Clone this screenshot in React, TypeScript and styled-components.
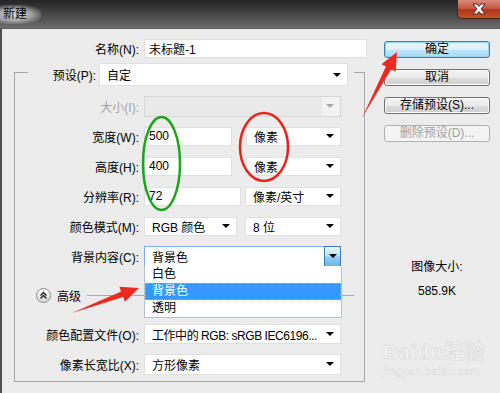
import styled, { createGlobalStyle } from 'styled-components';

const GlobalStyle = createGlobalStyle`
  html, body {
    margin: 0;
    padding: 0;
    background: #ececec;
  }
  body {
    font-family: "Liberation Sans", "Noto Sans CJK SC", sans-serif;
    font-size: 12px;
    color: #000;
  }
`;

const Window = styled.div`
  position: relative;
  width: 500px;
  height: 393px;
  overflow: hidden;
  background: #ececec;
`;

const TitleBar = styled.div`
  display: flex;
  justify-content: space-between;
  align-items: flex-start;
  height: 28px;
  background: linear-gradient(180deg, #242424 0%, #3e3e3e 40%, #5c5c5c 80%, #6e6e6e 100%);
`;

const Title = styled.span`
  margin-top: 5px;
  padding: 1px 14px 2px 3px;
  line-height: 16px;
  color: #000;
  background: radial-gradient(ellipse at 35% 50%, rgba(230, 230, 230, 0.95) 0%, rgba(200, 200, 200, 0.7) 45%, rgba(120, 120, 120, 0) 80%);
`;

const CloseButton = styled.div`
  display: flex;
  align-items: center;
  justify-content: center;
  width: 43px;
  height: 19px;
  box-sizing: border-box;
  border: 1px solid #3a2320;
  border-top: none;
  border-right: none;
  border-radius: 0 0 0 5px;
  background: linear-gradient(180deg, #d9897b 0%, #c45a46 45%, #b23318 55%, #c8512f 100%);
`;

const Body = styled.div`
  display: flex;
  height: 364px;
  border-top: 1px solid #5e5e5e;
  border-left: 2px solid #4e4e4e;
`;

const LeftColumn = styled.div`
  width: 368px;
  padding-top: 10px;
`;

const RightColumn = styled.div`
  display: flex;
  flex-direction: column;
  width: 106px;
  margin-left: 14px;
  padding-top: 12px;
`;

const NameRow = styled.div`
  display: grid;
  grid-template-columns: 137px 223px;
  column-gap: 5px;
  align-items: center;
  height: 19px;
`;

const Label = styled.span<{ $disabled?: boolean }>`
  text-align: right;
  white-space: nowrap;
  color: ${(p) => (p.$disabled ? '#a3a3a3' : '#000')};
`;

const TextBox = styled.input<{ $width: number }>`
  box-sizing: border-box;
  width: ${(p) => p.$width}px;
  height: 19px;
  margin: 0;
  padding: 0 4px;
  border: 1px solid #e0e0e0;
  background: #fff;
  font: inherit;
  color: #000;
  outline: none;
`;

const GroupBox = styled.fieldset`
  box-sizing: border-box;
  width: 351px;
  min-inline-size: 0;
  margin: 0 0 0 12px;
  padding: 5px 0 2px 0;
  border: 1px solid #a7a7a7;
`;

const Legend = styled.legend`
  display: flex;
  align-items: center;
  margin-left: 13px;
  padding: 5px 6px 0 0;
`;

const LegendLabel = styled.span`
  width: 68px;
  margin-right: 3px;
  text-align: right;
`;

const FormRow = styled.div`
  display: grid;
  grid-template-columns: 124px auto;
  column-gap: 5px;
  align-items: center;
  height: 30px;
`;

const Controls = styled.div<{ $gap?: number }>`
  display: flex;
  align-items: center;
  gap: ${(p) => p.$gap ?? 8}px;
`;

const SelectBox = styled.div<{ $width: number; $height?: number; $disabled?: boolean; $focused?: boolean }>`
  position: relative;
  display: flex;
  align-items: center;
  box-sizing: border-box;
  width: ${(p) => p.$width}px;
  height: ${(p) => p.$height ?? 19}px;
  padding-left: 7px;
  border: 1px solid ${(p) => (p.$focused ? '#7eb4ea' : p.$disabled ? '#d6d6d6' : '#e0e0e0')};
  background: ${(p) => (p.$disabled ? '#e9e9e9' : '#fff')};
  white-space: nowrap;
`;

const SelectText = styled.span<{ $condensed?: boolean }>`
  flex: 1;
  overflow: hidden;
  white-space: nowrap;
  letter-spacing: ${(p) => (p.$condensed ? '-0.45px' : 'normal')};
`;

const Arrow = styled.span<{ $disabled?: boolean }>`
  width: 0;
  height: 0;
  margin: 0 6px 0 4px;
  border-left: 4px solid transparent;
  border-right: 4px solid transparent;
  border-top: 4px solid ${(p) => (p.$disabled ? '#a8a8a8' : '#000')};
`;

const DisabledArrowCell = styled.div`
  display: flex;
  align-items: center;
  justify-content: center;
  align-self: stretch;
  width: 18px;
  background: #f2f2f2;
`;

const ArrowButton = styled.div`
  display: flex;
  align-items: center;
  justify-content: center;
  align-self: stretch;
  width: 15px;
  margin: -1px -1px -1px 0;
  border: 1px solid #3d7bad;
  background: linear-gradient(180deg, #e6f4fc 0%, #bde4f8 45%, #8fcaee 55%, #6db6e4 100%);
`;

const DropList = styled.ul`
  position: absolute;
  top: 100%;
  left: -1px;
  z-index: 2;
  box-sizing: border-box;
  width: 198px;
  margin: 0;
  padding: 0;
  list-style: none;
  background: #fff;
  border: 1px solid #b8c1cc;
  border-top: none;
`;

const DropItem = styled.li<{ $selected?: boolean }>`
  box-sizing: border-box;
  height: 17px;
  padding-left: 6px;
  line-height: 15px;
  border: 1px ${(p) => (p.$selected ? 'dotted #f0a040' : 'solid transparent')};
  background: ${(p) => (p.$selected ? '#3399ff' : '#fff')};
  color: ${(p) => (p.$selected ? '#fff' : '#000')};
`;

const AdvancedRow = styled.div`
  display: flex;
  align-items: center;
  height: 48px;
  padding-left: 21px;
`;

const RoundButton = styled.div`
  display: flex;
  align-items: center;
  justify-content: center;
  box-sizing: border-box;
  width: 15px;
  height: 15px;
  border-radius: 50%;
  border: 1px solid #8c8c8c;
  background: linear-gradient(180deg, #ffffff 0%, #ececec 50%, #d6d6d6 100%);
`;

const AdvancedLabel = styled.span`
  margin-left: 6px;
`;

const Divider = styled.div`
  flex: 1;
  height: 1px;
  margin: 0 10px 0 6px;
  background: #a9a9a9;
`;

const DialogButton = styled.button<{ $primary?: boolean }>`
  box-sizing: border-box;
  width: 106px;
  height: 17px;
  margin: 0 0 11px 0;
  padding: 0;
  font: inherit;
  line-height: 15px;
  color: #000;
  border-radius: 3px;
  border: 1px solid ${(p) => (p.$primary ? '#3c7fb1' : '#707070')};
  background: ${(p) =>
    p.$primary
      ? 'linear-gradient(180deg, #eaf6fd 0%, #d9f0fc 50%, #bee6fd 51%, #a7d9f5 100%)'
      : 'linear-gradient(180deg, #f2f2f2 0%, #ebebeb 50%, #dddddd 51%, #cfcfcf 100%)'};
  box-shadow: ${(p) => (p.$primary ? 'inset 0 0 0 1px #9ad3f0' : 'inset 0 0 0 1px #fcfcfc')};

  &:disabled {
    color: #a0a0a0;
    border-color: #adb2b5;
    background: #f4f4f4;
    box-shadow: none;
  }
`;

const ImageInfo = styled.div`
  display: flex;
  flex-direction: column;
  align-items: center;
  gap: 8px;
  margin-top: 106px;
  line-height: 16px;
`;

const Annotations = styled.svg`
  position: absolute;
  left: 0;
  top: 0;
  pointer-events: none;
  z-index: 5;
`;

const Watermark = styled.div`
  position: absolute;
  left: 383px;
  top: 336px;
  display: flex;
  flex-direction: column;
  align-items: flex-start;
  color: #f6f6f6;
  -webkit-text-stroke: 1px #e0e0e0;
  pointer-events: none;
`;

const WatermarkLogo = styled.span`
  font-size: 20px;
  font-weight: bold;
  letter-spacing: 1px;
`;

const WatermarkUrl = styled.span`
  font-size: 11px;
  -webkit-text-stroke: 0.5px #dedede;
  letter-spacing: 0.5px;
`;

const arrowPoints = (tx: number, ty: number, px: number, py: number) => {
  const dx = px - tx;
  const dy = py - ty;
  const len = Math.hypot(dx, dy);
  const ux = dx / len;
  const uy = dy / len;
  const nx = -uy;
  const ny = ux;
  const headLen = 18;
  const headHalf = 8;
  const shaftHalf = 3;
  const bx = px - ux * headLen;
  const by = py - uy * headLen;
  return [
    [tx, ty],
    [bx + nx * shaftHalf, by + ny * shaftHalf],
    [bx + nx * headHalf, by + ny * headHalf],
    [px, py],
    [bx - nx * headHalf, by - ny * headHalf],
    [bx - nx * shaftHalf, by - ny * shaftHalf],
  ]
    .map((p) => p.join(','))
    .join(' ');
};

interface SelectProps {
  text: string;
  width: number;
  height?: number;
  condensed?: boolean;
}

const Select = ({ text, width, height, condensed }: SelectProps) => (
  <SelectBox $width={width} $height={height}>
    <SelectText $condensed={condensed}>{text}</SelectText>
    <Arrow />
  </SelectBox>
);

export default function App() {
  return (
    <Window>
      <GlobalStyle />
      <TitleBar>
        <Title>新建</Title>
        <CloseButton>
          <svg width="16" height="12" viewBox="0 0 16 12">
            <path d="M2 1 L6 1 L8 3.5 L10 1 L14 1 L10 6 L14 11 L10 11 L8 8.5 L6 11 L2 11 L6 6 Z" fill="#fff" stroke="#4a2a24" strokeWidth="1" />
          </svg>
        </CloseButton>
      </TitleBar>

      <Body>
        <LeftColumn>
          <NameRow>
            <Label>名称(N):</Label>
            <TextBox $width={223} readOnly value="未标题-1" />
          </NameRow>

          <GroupBox>
            <Legend>
              <LegendLabel>预设(P):</LegendLabel>
              <Select text="自定" width={249} height={23} />
            </Legend>

            <FormRow>
              <Label $disabled>大小(I):</Label>
              <SelectBox $width={197} $height={21} $disabled>
                <SelectText />
                <DisabledArrowCell>
                  <Arrow $disabled />
                </DisabledArrowCell>
              </SelectBox>
            </FormRow>

            <FormRow>
              <Label>宽度(W):</Label>
              <Controls $gap={14}>
                <TextBox $width={88} readOnly value="500" />
                <Select text="像素" width={95} />
              </Controls>
            </FormRow>

            <FormRow>
              <Label>高度(H):</Label>
              <Controls $gap={14}>
                <TextBox $width={88} readOnly value="400" />
                <Select text="像素" width={95} />
              </Controls>
            </FormRow>

            <FormRow>
              <Label>分辨率(R):</Label>
              <Controls $gap={4}>
                <TextBox $width={97} readOnly value="72" />
                <Select text="像素/英寸" width={96} />
              </Controls>
            </FormRow>

            <FormRow>
              <Label>颜色模式(M):</Label>
              <Controls $gap={8}>
                <Select text="RGB 颜色" width={93} />
                <Select text="8 位" width={96} />
              </Controls>
            </FormRow>

            <FormRow>
              <Label>背景内容(C):</Label>
              <SelectBox $width={197} $height={21} $focused>
                <SelectText>背景色</SelectText>
                <ArrowButton>
                  <Arrow style={{ margin: 0 }} />
                </ArrowButton>
                <DropList>
                  <DropItem>白色</DropItem>
                  <DropItem $selected>背景色</DropItem>
                  <DropItem>透明</DropItem>
                </DropList>
              </SelectBox>
            </FormRow>

            <AdvancedRow>
              <RoundButton>
                <svg width="9" height="9" viewBox="0 0 9 9">
                  <path d="M1.5 4.5 L4.5 1.5 L7.5 4.5 M1.5 7.5 L4.5 4.5 L7.5 7.5" fill="none" stroke="#222" strokeWidth="1.4" />
                </svg>
              </RoundButton>
              <AdvancedLabel>高级</AdvancedLabel>
              <Divider />
            </AdvancedRow>

            <FormRow>
              <Label>颜色配置文件(O):</Label>
              <Select text="工作中的 RGB: sRGB IEC6196..." width={197} height={20} condensed />
            </FormRow>

            <FormRow>
              <Label>像素长宽比(X):</Label>
              <Select text="方形像素" width={197} height={21} />
            </FormRow>
          </GroupBox>
        </LeftColumn>

        <RightColumn>
          <DialogButton $primary>确定</DialogButton>
          <DialogButton>取消</DialogButton>
          <DialogButton>存储预设(S)...</DialogButton>
          <DialogButton disabled>删除预设(D)...</DialogButton>
          <ImageInfo>
            <span>图像大小:</span>
            <span>585.9K</span>
          </ImageInfo>
        </RightColumn>
      </Body>

      <Watermark>
        <WatermarkLogo>Baidu经验</WatermarkLogo>
        <WatermarkUrl>jingyan.baidu.com</WatermarkUrl>
      </Watermark>

      <Annotations width="500" height="393" viewBox="0 0 500 393">
        <ellipse cx="161.5" cy="163.5" rx="18.5" ry="46.5" fill="none" stroke="#1ea51e" strokeWidth="2.5" />
        <ellipse cx="264" cy="147" rx="24" ry="34" fill="none" stroke="#e8231c" strokeWidth="2.5" />
        <polygon points={arrowPoints(362, 118, 397, 52)} fill="#ec2a20" />
        <polygon points={arrowPoints(72, 313, 139, 288)} fill="#ec2a20" />
      </Annotations>
    </Window>
  );
}
